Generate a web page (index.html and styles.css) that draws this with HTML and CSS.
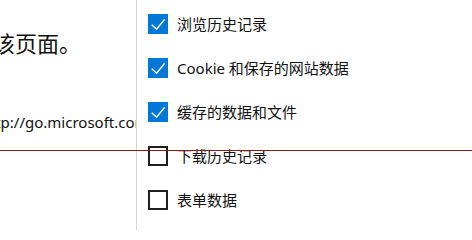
FILE: index.html
```html
<!DOCTYPE html>
<html lang="zh-CN">
<head>
<meta charset="utf-8">
<title>清除浏览数据</title>
<link rel="stylesheet" href="styles.css">
</head>
<body>
<div class="page">
  <div class="left">
    <div class="title">该页面。</div>
    <div class="link">http://go.microsoft.com</div>
  </div>
  <div class="right">
    <label class="row"><span class="box checked"><svg viewBox="0 0 20 20" width="20" height="20"><path d="M3.7 10.8 L8.6 15.2 L16.6 5.4" fill="none" stroke="#fff" stroke-width="1.5"/></svg></span><span class="label">浏览历史记录</span></label>
    <label class="row"><span class="box checked"><svg viewBox="0 0 20 20" width="20" height="20"><path d="M3.7 10.8 L8.6 15.2 L16.6 5.4" fill="none" stroke="#fff" stroke-width="1.5"/></svg></span><span class="label">Cookie 和保存的网站数据</span></label>
    <label class="row"><span class="box checked"><svg viewBox="0 0 20 20" width="20" height="20"><path d="M3.7 10.8 L8.6 15.2 L16.6 5.4" fill="none" stroke="#fff" stroke-width="1.5"/></svg></span><span class="label">缓存的数据和文件</span></label>
    <label class="row"><span class="box"></span><span class="label">下载历史记录</span></label>
    <label class="row"><span class="box"></span><span class="label">表单数据</span></label>
  </div>
  <div class="redline"></div>
</div>
</body>
</html>
```
FILE: styles.css
```css
html, body {
  margin: 0;
  padding: 0;
  background: #fff;
}
.page {
  position: relative;
  width: 472px;
  height: 230px;
  display: flex;
  overflow: hidden;
  font-family: "Noto Sans", "Noto Sans CJK SC", sans-serif;
  color: #111;
}
.left {
  width: 136px;
  flex: none;
  overflow: hidden;
  white-space: nowrap;
  padding-top: 27px;
  box-sizing: border-box;
}
.title {
  font-size: 22px;
  line-height: 30px;
  margin-left: -7px;
  font-family: "Noto Sans CJK SC", sans-serif;
}
.link {
  margin-top: 55px;
  font-size: 15px;
  line-height: 20px;
  margin-left: -19.5px;
}
.right {
  flex: 1;
  border-left: 1px solid #d4d4d4;
  padding: 14px 0 0 11px;
  display: flex;
  flex-direction: column;
  gap: 24px;
}
.row {
  display: flex;
  align-items: center;
  height: 20px;
  gap: 9px;
}
.box {
  width: 20px;
  height: 20px;
  box-sizing: border-box;
  border: 2px solid #1f1f1f;
  flex: none;
}
.box.checked {
  border: none;
  background: #0078d7;
}
.box svg {
  display: block;
}
.label {
  font-size: 15px;
  line-height: 20px;
  white-space: nowrap;
}
.redline {
  position: absolute;
  left: 0;
  right: 0;
  top: 150px;
  height: 1px;
  background: #8b1c1c;
}
```
